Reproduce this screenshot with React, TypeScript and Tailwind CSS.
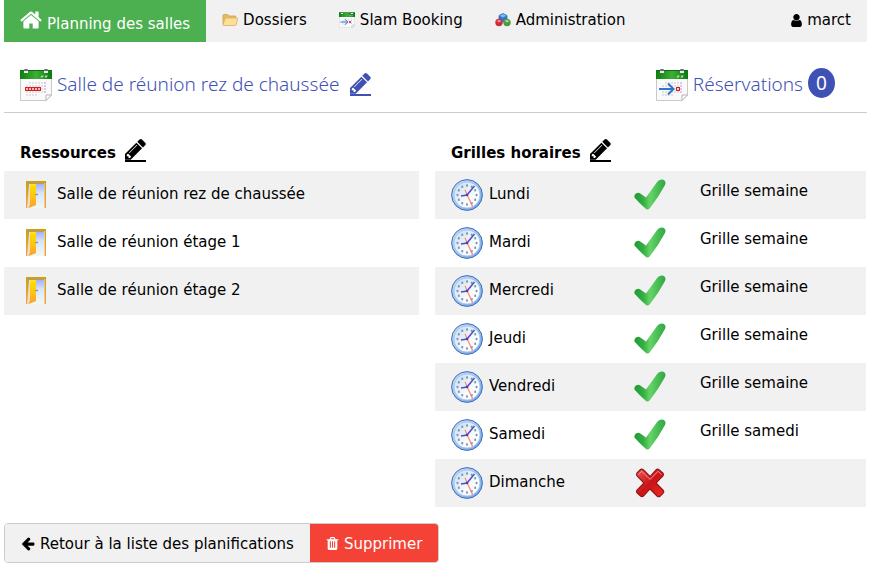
import type { ReactNode } from "react";

const HOME =
  "M1472 992v480q0 26-19 45t-45 19h-384v-384h-256v384h-384q-26 0-45-19t-19-45v-480q0-1 .5-3t.5-3l575-474 575 474q1 2 1 6zm223-69l-62 74q-8 9-21 11h-3q-13 0-21-7l-692-577-692 577q-12 8-24 7-13-2-21-11l-62-74q-8-10-7-23.5t11-21.5l719-599q32-26 76-26t76 26l244 204v-195q0-14 9-23t23-9h192q14 0 23 9t9 23v408l219 182q10 8 11 21.5t-7 23.5z";
const ARROW_LEFT =
  "M1664 896v128q0 53-32.5 90.5t-84.5 37.5h-704l293 294q38 36 38 90t-38 90l-75 76q-37 37-90 37-52 0-91-37l-651-652q-37-37-37-90 0-52 37-91l651-650q38-38 91-38 52 0 90 38l75 74q38 38 38 91t-38 91l-293 293h704q52 0 84.5 37.5t32.5 90.5z";
const TRASH =
  "M704 1376v-704q0-14-9-23t-23-9h-64q-14 0-23 9t-9 23v704q0 14 9 23t23 9h64q14 0 23-9t9-23zm256 0v-704q0-14-9-23t-23-9h-64q-14 0-23 9t-9 23v704q0 14 9 23t23 9h64q14 0 23-9t9-23zm256 0v-704q0-14-9-23t-23-9h-64q-14 0-23 9t-9 23v704q0 14 9 23t23 9h64q14 0 23-9t9-23zm-544-992h448l-48-117q-7-9-17-11h-317q-10 2-17 11zm928 32v64q0 14-9 23t-23 9h-96v948q0 83-47 143.5t-113 60.5h-832q-66 0-113-58.5t-47-141.5v-952h-96q-14 0-23-9t-9-23v-64q0-14 9-23t23-9h309l70-167q15-37 54-63t79-26h320q40 0 79 26t54 63l70 167h309q14 0 23 9t9 23z";
const USER =
  "M1536 1399q0 109-62.5 187t-150.5 78h-854q-88 0-150.5-78t-62.5-187q0-85 8.5-160.5t31.5-152 58.5-131 94-89 134.5-34.5q131 128 313 128t313-128q76 0 134.5 34.5t94 89 58.5 131 31.5 152 8.5 160.5zm-256-887q0 159-112.5 271.5t-271.5 112.5-271.5-112.5-112.5-271.5 112.5-271.5 271.5-112.5 271.5 112.5 112.5 271.5z";
const PENCIL =
  "M491 1536l91-91-235-235-91 91v107h128v128h107zm523-928q0-22-22-22-10 0-17 7l-542 542q-7 7-7 17 0 22 22 22 10 0 17-7l542-542q7-7 7-17zm-54-192l416 416-832 832h-416v-416zm683 96q0 53-37 90l-166 166-416-416 166-165q36-38 90-38 53 0 91 38l235 234q37 39 37 91z";

function Glyph({ d, box, className }: { d: string; box: string; className: string }) {
  return (
    <svg viewBox={box} className={className} fill="currentColor" aria-hidden="true">
      <path d={d} />
    </svg>
  );
}

function EditLink({ label }: { label: string }) {
  return (
    <a href="#edit" aria-label={label} className="mb-[2px] block border-b-2 border-current">
      <Glyph d={PENCIL} box="128 149 1536 1536" className="block h-[21px] w-[21px]" />
    </a>
  );
}

function CalendarIcon({ kind, className }: { kind: "week" | "next"; className: string }) {
  const dots: ReactNode[] = [];
  for (let r = 0; r < 5; r++) {
    for (let c = 0; c < 7; c++) {
      if (r === 0 && c === 0) continue;
      if (r === 4 && c > 3) continue;
      dots.push(
        <rect
          key={`${r}-${c}`}
          x={6 + c * 3}
          y={13 + r * 3}
          width="2"
          height="2"
          fill={c === 6 ? "#dcc6f5" : "#e1e1e6"}
        />,
      );
    }
  }
  return (
    <svg viewBox="0 0 32 32" className={className} aria-hidden="true">
      <defs>
        <linearGradient id={`green-${kind}`} x1="0" x2="1" y1="0" y2="0">
          <stop offset="0" stopColor="#0d7f12" />
          <stop offset="0.5" stopColor="#3fae35" />
          <stop offset="1" stopColor="#0a7a10" />
        </linearGradient>
      </defs>
      <path d="M.5 4H31.500V26L26 31.500H.5Z" fill="#fafafa" stroke="#c9c9c9" />
      <path d="M26 31.500V26H31.500Z" fill="#fff" stroke="#b5b5b5" />
      <rect y="1" width="32" height="9" fill={`url(#green-${kind})`} />
      <rect y="1" width="32" height="1" fill="#0b6b10" />
      <path d="M20.500 8.500l.8-2h2.400l-.8 2zM24.500 8.500l.8-2h2.400l-.8 2z" fill="#a8dba4" />
      <rect x="4" y="0" width="4" height="4" rx="1" fill="#6f6f6f" />
      <rect x="4" y="2" width="4" height="2" fill="#e8e8e8" />
      <rect x="24" y="0" width="4" height="4" rx="1" fill="#6f6f6f" />
      <rect x="24" y="2" width="4" height="2" fill="#e8e8e8" />
      {dots}
      {kind === "week" ? (
        <>
          <rect x="5" y="18" width="16" height="4" fill="#d42020" />
          {[6, 9, 12, 15, 18].map((x) => (
            <rect key={x} x={x} y="19" width="2" height="2" fill="#ffb5b5" />
          ))}
        </>
      ) : (
        <>
          <path d="M3 20H17M12 14.500L17.500 20L12 25.500" fill="none" stroke="#2f78cf" strokeWidth="2" />
          <rect x="20.500" y="18.500" width="3" height="3" fill="#ffd0d0" stroke="#d42020" />
        </>
      )}
    </svg>
  );
}

function FolderIcon() {
  return (
    <svg viewBox="0 0 16 16" className="size-4" aria-hidden="true">
      <path d="M1 12.500V3.500Q1 2.500 2 2.500H5.500L7 4H13Q14 4 14 5V12.500Z" fill="#e6b964" stroke="#cfa052" strokeWidth=".8" />
      <path d="M3 7Q3.300 6 4.300 6H15Q15.800 6 15.600 7L14.300 12.500Q14 13.500 13 13.500H1.500Q.9 13.500 1.100 12.600Z" fill="#fbe09a" stroke="#deb163" strokeWidth=".8" />
    </svg>
  );
}

function ModulesIcon() {
  return (
    <svg viewBox="0 0 16 16" className="size-4" aria-hidden="true">
      <path d="M8 1.500L12 3.500V8L8 10L4 8V3.500Z" fill="#2e79cf" stroke="#2362ad" strokeWidth=".7" />
      <path d="M8 2L11.500 3.700L8 5.400L4.500 3.700Z" fill="#84b8f0" />
      <circle cx="4" cy="10.500" r="3.700" fill="#c92d3b" />
      <path d="M1.500 9L4 7.700L6.500 9L4 10.500Z" fill="#ee8f96" />
      <circle cx="12" cy="10.500" r="3.700" fill="#4f9a3d" />
      <path d="M9.500 9L12 7.700L14.500 9L12 10.500Z" fill="#a5d897" />
    </svg>
  );
}

function DoorIcon() {
  return (
    <svg viewBox="0 0 32 32" className="size-8" aria-hidden="true">
      <defs>
        <linearGradient id="door-sky" x1="0" x2="0" y1="0" y2="1">
          <stop offset="0" stopColor="#9aa4ff" />
          <stop offset="0.45" stopColor="#d8e6fb" />
          <stop offset="1" stopColor="#f4f8f0" />
        </linearGradient>
        <linearGradient id="door-leaf" x1="0" x2="0" y1="0" y2="1">
          <stop offset="0" stopColor="#ffe000" />
          <stop offset="0.6" stopColor="#ffbe14" />
          <stop offset="1" stopColor="#ff9a2e" />
        </linearGradient>
        <linearGradient id="door-frame" x1="0" x2="0" y1="0" y2="1">
          <stop offset="0" stopColor="#cda00c" />
          <stop offset="1" stopColor="#f3a24c" />
        </linearGradient>
      </defs>
      <rect x="8" y="3" width="16" height="26" fill="url(#door-sky)" />
      <path d="M6 29V2H26V29H24.500V4H8V29Z" fill="url(#door-frame)" />
      <path d="M8 4H24V5H9V27H8Z" fill="#b59a70" />
      <path d="M9 5H16V26L7 29.500Z" fill="#e9dec0" />
      <path d="M10 5.500H16V26L8.500 29L10 26Z" fill="url(#door-leaf)" />
      <path d="M15 15.500h3M17 14.500v2" stroke="#8c97a8" strokeWidth="1" />
    </svg>
  );
}

function ClockIcon() {
  const marks = Array.from({ length: 12 }, (_, i) => {
    const a = (i * Math.PI) / 6;
    return { x: 16 + 9.5 * Math.sin(a), y: 16 - 9.5 * Math.cos(a) };
  });
  return (
    <svg viewBox="0 0 32 32" className="size-8 shrink-0" aria-hidden="true">
      <defs>
        <linearGradient id="clock-rim" x1="0" x2="1" y1="0" y2="1">
          <stop offset="0" stopColor="#c8e0fa" />
          <stop offset="1" stopColor="#6aa2e8" />
        </linearGradient>
        <linearGradient id="clock-face" x1="0" x2="1" y1="0" y2="1">
          <stop offset="0" stopColor="#c5dcf5" />
          <stop offset="0.6" stopColor="#f6faff" />
          <stop offset="1" stopColor="#ffffff" />
        </linearGradient>
      </defs>
      <circle cx="16" cy="16" r="15.400" fill="url(#clock-rim)" stroke="#4171b5" strokeWidth="1" />
      <circle cx="16" cy="16" r="13" fill="url(#clock-face)" stroke="#a5c8f0" strokeWidth=".8" />
      {marks.map((m, i) => (
        <rect key={i} x={m.x - 0.9} y={m.y - 1.1} width="1.800" height="2.200" fill="#858d9b" />
      ))}
      <path d="M14 11L21.500 27.500" stroke="#ff8a70" strokeWidth="1.300" />
      <path d="M23.500 7L16 16L10 17" fill="none" stroke="#5050b8" strokeWidth="1.500" />
      <circle cx="16" cy="16" r="1.300" fill="#4545a8" />
    </svg>
  );
}

function CheckIcon() {
  return (
    <svg viewBox="0 0 32 32" className="size-8" role="img" aria-label="Ouvert">
      <defs>
        <linearGradient id="check-fill" x1="0" x2="1" y1="0" y2="0">
          <stop offset="0" stopColor="#1f9a33" />
          <stop offset="0.3" stopColor="#35b045" />
          <stop offset="0.5" stopColor="#66d468" />
          <stop offset="1" stopColor="#2fa743" />
        </linearGradient>
      </defs>
      <path
        d="M.5 18.500Q0 16 2 14.500Q4.500 12.700 7 15L12 18.500L23.500 2.500Q26 -.2 29.500 .8Q32.500 2.500 31 6Q24 19 16 29Q13.500 32 11 29Q6 25 .5 18.500Z"
        fill="url(#check-fill)"
      />
    </svg>
  );
}

function CrossIcon() {
  return (
    <svg viewBox="0 0 32 32" className="size-8" role="img" aria-label="Fermé">
      <defs>
        <linearGradient id="cross-fill" x1="0" x2="1" y1="0" y2="1">
          <stop offset="0" stopColor="#ee5a5a" />
          <stop offset="0.5" stopColor="#c91418" />
          <stop offset="1" stopColor="#f02a22" />
        </linearGradient>
      </defs>
      <path
        d="M3 6L6.500 2.500Q8 1.500 9.500 3L16 9.500L22 3Q23.500 1.500 25 2.700L29 6.200Q30 7.500 29 8.800L22 16L29.500 23.500Q30.500 25 29 26.300L26 29.300Q24.500 30.300 23 29L16 22L9.500 29Q8 30.300 6.500 29L3 25.800Q1.800 24.500 3 23L10 16L3 8.800Q1.800 7.500 3 6Z"
        fill="url(#cross-fill)"
        stroke="#8e1216"
        strokeWidth="1.100"
      />
      <path d="M4.500 7.300L7.800 4.300L16 12.500L24 4.300L27.500 7.500" fill="none" stroke="#ffa7a7" strokeOpacity=".8" />
    </svg>
  );
}

const rooms = [
  "Salle de réunion rez de chaussée",
  "Salle de réunion étage 1",
  "Salle de réunion étage 2",
];

const days = [
  { name: "Lundi", grid: "Grille semaine" },
  { name: "Mardi", grid: "Grille semaine" },
  { name: "Mercredi", grid: "Grille semaine" },
  { name: "Jeudi", grid: "Grille semaine" },
  { name: "Vendredi", grid: "Grille semaine" },
  { name: "Samedi", grid: "Grille samedi" },
  { name: "Dimanche", grid: "" },
];

export default function App() {
  return (
    <div className="pr-[5px] pl-1 font-['DejaVu_Sans',Verdana,sans-serif] text-[15px] leading-[22px] text-black">
      <nav className="flex h-[42px] bg-[#f1f1f1]">
        <a href="#planning" className="flex items-center gap-[5px] bg-[#4caf50] px-4 text-white">
          <Glyph d={HOME} box="64 0 1664 1792" className="mb-[2px] h-6 w-[22px]" />
          <span className="pt-[6px]">Planning des salles</span>
        </a>
        <a href="#dossiers" className="flex items-center gap-[5px] px-4 pb-[2px]">
          <FolderIcon />
          Dossiers
        </a>
        <a href="#booking" className="flex items-center gap-[5px] px-4 pb-[2px]">
          <CalendarIcon kind="next" className="size-4" />
          Slam Booking
        </a>
        <a href="#administration" className="flex items-center gap-[5px] px-4 pb-[2px]">
          <ModulesIcon />
          Administration
        </a>
        <a href="#compte" className="ml-auto flex items-center gap-[5px] px-4 pb-[2px]">
          <Glyph d={USER} box="256 0 1280 1792" className="h-[15px] w-[11px]" />
          marct
        </a>
      </nav>

      <header className="flex h-[71px] items-center justify-between border-b border-[#ccc] pt-4 pr-8 pl-4 font-['Noto_Sans','Open_Sans',sans-serif] text-[19px] font-[350] text-[#3f51b5]">
        <h1 className="flex items-center gap-[5px]">
          <CalendarIcon kind="week" className="size-8" />
          <span className="mr-[6px] pb-[2px]">Salle de réunion rez de chaussée</span>
          <EditLink label="Modifier la salle" />
        </h1>
        <a href="#reservations" className="flex items-center gap-[5px]">
          <CalendarIcon kind="next" className="size-8" />
          <span className="pb-[2px]">Réservations</span>
          <span className="mb-1 flex h-[30px] w-[27px] items-center justify-center rounded-[50%] bg-[#3f51b5] font-normal text-white">
            0
          </span>
        </a>
      </header>

      <main className="grid grid-cols-2 pr-px">
        <section className="pr-4">
          <h2 className="flex h-[58px] items-end gap-[9px] pb-[7px] pl-4 font-bold">
            <span>Ressources</span>
            <EditLink label="Modifier les ressources" />
          </h2>
          <ul>
            {rooms.map((room) => (
              <li key={room} className="flex h-12 items-center gap-[5px] px-4 odd:bg-[#f1f1f1]">
                <DoorIcon />
                <a href="#salle" className="pb-[2px]">
                  {room}
                </a>
              </li>
            ))}
          </ul>
        </section>

        <section>
          <h2 className="flex h-[58px] items-end gap-[9px] pb-[7px] pl-4 font-bold">
            <span>Grilles horaires</span>
            <EditLink label="Modifier les grilles" />
          </h2>
          <table className="w-full table-fixed">
            <colgroup>
              <col className="w-[199px]" />
              <col className="w-[66px]" />
              <col />
            </colgroup>
            <tbody>
              {days.map((day) => (
                <tr key={day.name} className="h-12 odd:bg-[#f1f1f1]">
                  <th scope="row" className="p-0 pl-4 font-normal">
                    <span className="flex items-center gap-[6px]">
                      <ClockIcon />
                      <span className="pb-[2px]">{day.name}</span>
                    </span>
                  </th>
                  <td className="p-0">{day.grid ? <CheckIcon /> : <CrossIcon />}</td>
                  <td className="p-0 pt-[9px] align-top">{day.grid}</td>
                </tr>
              ))}
            </tbody>
          </table>
        </section>
      </main>

      <footer className="flex pt-4">
        <div className="flex h-10 overflow-hidden rounded border border-[#ccc]">
          <button type="button" className="flex items-center gap-[5px] bg-[#f1f1f1] px-4">
            <Glyph d={ARROW_LEFT} box="64 0 1664 1792" className="h-[15px] w-[14px]" />
            <span className="pt-px">Retour à la liste des planifications</span>
          </button>
          <button type="button" className="flex items-center gap-[5px] bg-[#f44336] px-4 text-white">
            <Glyph d={TRASH} box="192 0 1408 1792" className="h-[15px] w-[13px]" />
            <span className="pt-px">Supprimer</span>
          </button>
        </div>
      </footer>
    </div>
  );
}
